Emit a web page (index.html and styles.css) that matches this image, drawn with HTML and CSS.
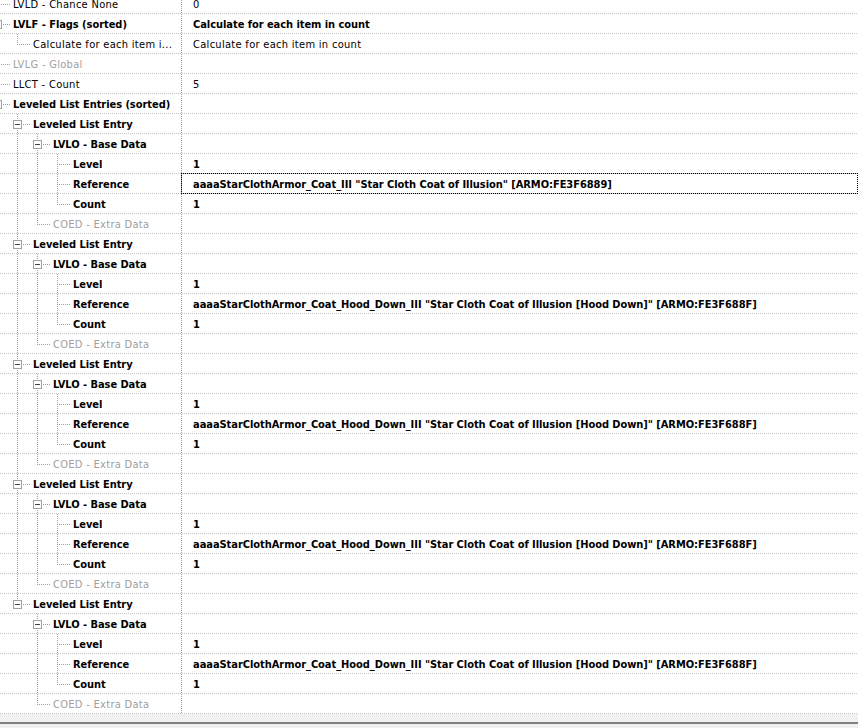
FILE: index.html
```html
<!DOCTYPE html>
<html>
  <head>
    <title>Leveled List</title>
    <link rel="stylesheet" href="styles.css">
  </head>

  <body>
    <div class="tree" id="record-tree"></div>
    <div class="splitter"></div>

    <script>
      var refFirst =
        'aaaaStarClothArmor_Coat_III "Star Cloth Coat of Illusion" [ARMO:FE3F6889]';
      var refHood =
        'aaaaStarClothArmor_Coat_Hood_Down_III "Star Cloth Coat of Illusion [Hood Down]" [ARMO:FE3F688F]';

      function makeEntry(reference, focused) {
        return {
          label: "Leveled List Entry",
          bold: true,
          children: [
            {
              label: "LVLO - Base Data",
              bold: true,
              children: [
                { label: "Level", value: "1", bold: true },
                { label: "Reference", value: reference, bold: true, focused: focused },
                { label: "Count", value: "1", bold: true },
              ],
            },
            { label: "COED - Extra Data", empty: true },
          ],
        };
      }

      var record = [
        { label: "LVLD - Chance None", value: "0" },
        {
          label: "LVLF - Flags (sorted)",
          value: "Calculate for each item in count",
          bold: true,
          children: [
            {
              label: "Calculate for each item i...",
              value: "Calculate for each item in count",
            },
          ],
        },
        { label: "LVLG - Global", empty: true },
        { label: "LLCT - Count", value: "5" },
        {
          label: "Leveled List Entries (sorted)",
          bold: true,
          children: [
            makeEntry(refFirst, true),
            makeEntry(refHood),
            makeEntry(refHood),
            makeEntry(refHood),
            makeEntry(refHood),
          ],
        },
      ];

      var tree = document.getElementById("record-tree");

      // guides holds one flag per ancestor level: true when that level
      // still has siblings further down, so its line keeps going
      function addNodes(nodes, guides, isRoot) {
        for (var i = 0; i < nodes.length; i++) {
          var node = nodes[i];
          var isLast = !isRoot && i == nodes.length - 1;

          var row = document.createElement("div");
          row.className = "row";

          var name = document.createElement("div");
          name.className = "name";
          var indent = document.createElement("div");
          indent.className = "indent";

          for (var g = 0; g < guides.length; g++) {
            var guide = document.createElement("span");
            guide.className = guides[g] ? "guide pipe" : "guide";
            indent.appendChild(guide);
          }

          var conn = document.createElement("span");
          conn.className = "guide conn " + (isLast ? "elbow" : "tee");
          if (node.children) {
            var box = document.createElement("span");
            box.className = "expander";
            conn.appendChild(box);
          }
          indent.appendChild(conn);

          var label = document.createElement("span");
          label.className = "label";
          if (node.bold) label.className += " bold";
          if (node.empty) label.className += " empty";
          label.textContent = node.label;
          indent.appendChild(label);

          name.appendChild(indent);
          row.appendChild(name);

          var value = document.createElement("div");
          value.className = "value";
          if (node.bold) value.className += " bold";
          if (node.focused) value.className += " focused";
          value.textContent = node.value || "";
          row.appendChild(value);

          tree.appendChild(row);

          if (node.children) {
            addNodes(node.children, guides.concat([!isLast]), false);
          }
        }
      }

      addNodes(record, [], true);
    </script>
  </body>
</html>
```

FILE: styles.css
```css
body {
  margin: 0;
  background-color: #f0f0f0;
  font-family: "DejaVu Sans Condensed", "DejaVu Sans", sans-serif;
  font-size: 11px;
  letter-spacing: 0.3px;
  color: #000;
  overflow: hidden;
}

.tree {
  background-color: #fff;
  margin-top: -6px;
}

.row {
  display: flex;
  height: 20px;
  line-height: 21px;
  background-image: linear-gradient(to right, #c4c4c4 50%, transparent 50%);
  background-size: 2px 1px;
  background-repeat: repeat-x;
  background-position: left bottom;
}

.name {
  width: 181px;
  flex: none;
  overflow: hidden;
}

.indent {
  display: flex;
  margin-left: -13px;
  height: 20px;
}

.guide {
  position: relative;
  width: 20px;
  height: 20px;
  flex: none;
}

/* dotted tree lines */
.pipe::before,
.conn::before {
  content: "";
  position: absolute;
  left: 10px;
  top: 0;
  width: 1px;
  height: 20px;
  background-image: linear-gradient(to bottom, #a0a0a0 50%, transparent 50%);
  background-size: 1px 2px;
}

.elbow::before {
  height: 11px;
}

.conn::after {
  content: "";
  position: absolute;
  left: 10px;
  top: 10px;
  width: 14px;
  height: 1px;
  background-image: linear-gradient(to right, #a0a0a0 50%, transparent 50%);
  background-size: 2px 1px;
}

.expander {
  position: absolute;
  left: 6px;
  top: 6px;
  width: 7px;
  height: 7px;
  border: 1px solid #a0a0a0;
  background-color: #fff;
  z-index: 1;
}

.expander::after {
  content: "";
  position: absolute;
  left: 1px;
  top: 3px;
  width: 5px;
  height: 1px;
  background-color: #404040;
}

.label {
  margin-left: 6px;
  white-space: nowrap;
  overflow: hidden;
  min-width: 0;
}

.bold {
  font-weight: bold;
  letter-spacing: -0.05px;
}

.empty {
  color: #a0a0a0;
}

.value {
  position: relative;
  flex: 1;
  padding-left: 12px;
  white-space: nowrap;
  background-image: linear-gradient(to bottom, #a0a0a0 50%, transparent 50%);
  background-size: 1px 2px;
  background-repeat: repeat-y;
}

.focused::after {
  content: "";
  position: absolute;
  left: 0;
  top: -1px;
  right: 0;
  bottom: 0;
  border: 1px dotted #000;
}

.splitter {
  height: 8px;
  border-bottom: 2px solid #808080;
}
```
